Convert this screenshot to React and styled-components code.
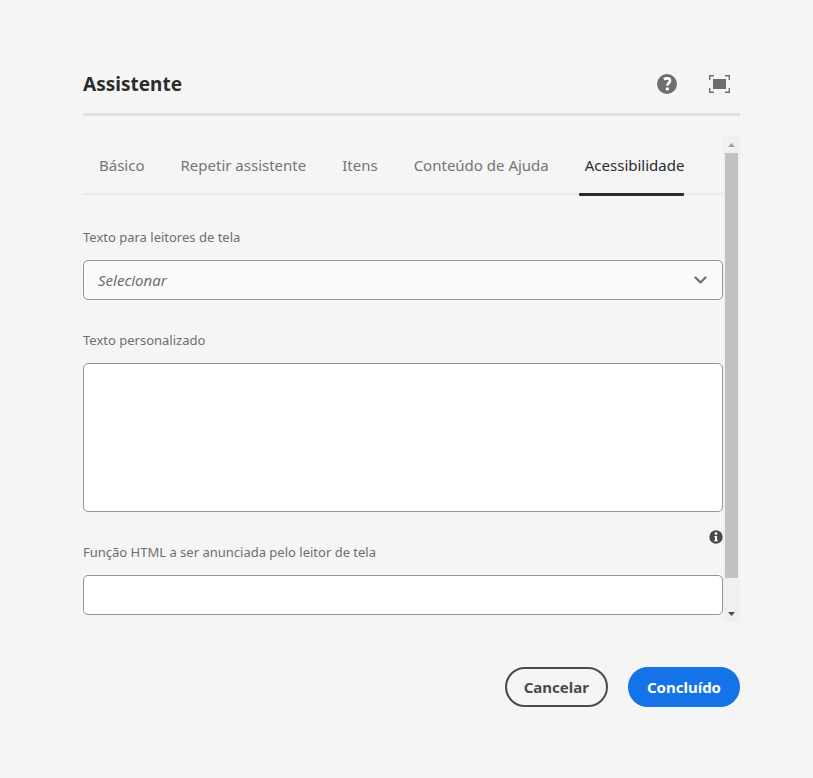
import React, { useState } from 'react';
import styled, { createGlobalStyle } from 'styled-components';

const GlobalStyle = createGlobalStyle`
  *, *::before, *::after { box-sizing: border-box; }
  body {
    margin: 0;
    background: #f5f5f5;
    color: #6e6e6e;
    font-family: 'Noto Sans', sans-serif;
  }
  button, input, select, textarea { font-family: inherit; margin: 0; }
`;

const Dialog = styled.main`
  display: flex;
  flex-direction: column;
  padding: 64px 73px 64px 83px;
`;

const Header = styled.header`
  display: flex;
  align-items: center;
  justify-content: space-between;
  height: 52px;
  padding: 0 10px 9px 0;
  border-bottom: 3px solid #e0e0e0;
`;

const Title = styled.h1`
  margin: 0;
  font-size: 19px;
  line-height: 24px;
  font-weight: 700;
  color: #2c2c2c;
`;

const HeaderActions = styled.div`
  display: flex;
  align-items: center;
  gap: 32px;
`;

const IconButton = styled.button`
  display: flex;
  padding: 0;
  border: 0;
  background: none;
  color: ${({ $dark }) => ($dark ? '#4b4b4b' : '#6e6e6e')};
  cursor: pointer;
`;

const Body = styled.div`
  display: flex;
  margin-top: 20px;
`;

const Content = styled.div`
  flex: 1;
  min-width: 0;
  padding-bottom: 7px;
`;

const TabList = styled.div`
  display: flex;
  gap: 36px;
  height: 59px;
  padding: 0 16px;
  border-bottom: 2px solid #eaeaea;
`;

const Tab = styled.button`
  position: relative;
  padding: 0;
  border: 0;
  background: none;
  font-size: 15px;
  line-height: 24px;
  white-space: nowrap;
  color: ${({ $active }) => ($active ? '#2c2c2c' : '#747474')};
  cursor: pointer;

  &::after {
    content: '';
    display: ${({ $active }) => ($active ? 'block' : 'none')};
    position: absolute;
    left: -6px;
    right: 0;
    bottom: -3px;
    height: 3px;
    border-radius: 1px;
    background: #2c2c2c;
  }
`;

const Form = styled.form`
  display: flex;
  flex-direction: column;
  gap: 30px;
  padding-top: 32px;
`;

const Field = styled.div`
  display: flex;
  flex-direction: column;
  gap: 13px;
`;

const Label = styled.label`
  font-size: 13px;
  line-height: 20px;
  color: #6e6e6e;
`;

const SelectBox = styled.div`
  display: grid;
  align-items: center;

  > * { grid-area: 1 / 1; }
  > svg { justify-self: end; margin-right: 16px; pointer-events: none; }
`;

const Select = styled.select`
  appearance: none;
  width: 100%;
  height: 40px;
  padding: 0 40px 0 14px;
  border: 1px solid #959595;
  border-radius: 5px;
  background: #fafafa;
  color: #6e6e6e;
  font-size: 15px;
  font-style: italic;
`;

const TextArea = styled.textarea`
  display: block;
  width: 100%;
  height: 149px;
  padding: 8px 14px;
  border: 1px solid #959595;
  border-radius: 5px;
  background: #fff;
  font-size: 15px;
  resize: none;
`;

const TextInput = styled.input`
  width: 100%;
  height: 40px;
  padding: 0 14px;
  border: 1px solid #959595;
  border-radius: 5px;
  background: #fff;
  font-size: 15px;
`;

const LabelRow = styled.div`
  display: flex;
  align-items: flex-end;
  justify-content: space-between;
`;

const InfoSlot = styled.div`
  align-self: flex-start;
  height: 32px;
`;

const InfoField = styled(Field)`
  margin-top: -12px;
`;

const ScrollBar = styled.div`
  display: flex;
  flex-direction: column;
  width: 17px;
  background: #f0f0f0;
`;

const ScrollArrow = styled.button`
  display: flex;
  align-items: center;
  justify-content: center;
  height: 17px;
  padding: 0;
  border: 0;
  background: none;
  color: ${({ $muted }) => ($muted ? '#a3a3a3' : '#505050')};
`;

const ScrollTrack = styled.div`
  flex: 1;
  padding: 0 2px;
`;

const ScrollThumb = styled.div`
  height: 94%;
  background: #c1c1c1;
`;

const Footer = styled.footer`
  display: flex;
  justify-content: flex-end;
  gap: 20px;
  margin-top: 45px;
`;

const ActionButton = styled.button`
  height: 40px;
  padding: 0 17px;
  border: 2px solid ${({ $primary }) => ($primary ? '#1473e6' : '#4b4b4b')};
  border-radius: 20px;
  background: ${({ $primary }) => ($primary ? '#1473e6' : 'transparent')};
  color: ${({ $primary }) => ($primary ? '#fff' : '#4b4b4b')};
  font-size: 15px;
  font-weight: 700;
  cursor: pointer;
`;

const HelpIcon = () => (
  <svg width="20" height="20" viewBox="0 0 20 20" aria-hidden="true">
    <circle cx="10" cy="10" r="10" fill="currentColor" />
    <path d="M7 5.4C8 4.6 9 4.4 10.1 4.4c1.800 0 2.900.9 2.900 2.400 0 1.100-.5 1.700-1.400 2.500-.9.8-1.200 1.200-1.100 2.400" fill="none" stroke="#fff" strokeWidth="2.700" />
    <circle cx="10.300" cy="14.900" r="1.700" fill="#fff" />
  </svg>
);

const FullScreenIcon = () => (
  <svg width="21" height="18" viewBox="0 0 21 18" aria-hidden="true">
    <rect x="4" y="4" width="13" height="10" fill="currentColor" />
    <path d="M.7 5V.7H5M16 .7h4.300V5M20.300 13v4.300H16M5 17.300H.7V13" fill="none" stroke="currentColor" strokeWidth="1.400" />
  </svg>
);

const ChevronIcon = () => (
  <svg width="13" height="8" viewBox="0 0 13 8" aria-hidden="true">
    <path d="M1.500 1.500l5 5 5-5" fill="none" stroke="#6e6e6e" strokeWidth="2.200" strokeLinecap="round" strokeLinejoin="round" />
  </svg>
);

const InfoIcon = () => (
  <svg width="14" height="14" viewBox="0 0 14 14" aria-hidden="true">
    <circle cx="7" cy="7" r="6.700" fill="currentColor" />
    <circle cx="7" cy="3.600" r="1.300" fill="#fff" />
    <path d="M5.300 6H8v4.200h1v1H5.200v-1H6V7h-.7z" fill="#fff" />
  </svg>
);

const ArrowIcon = ({ up }) => (
  <svg width="7" height="4" viewBox="0 0 7 4" aria-hidden="true">
    <path d={up ? 'M0 4L3.500 0 7 4z' : 'M0 0l3.500 4L7 0z'} fill="currentColor" />
  </svg>
);

const TABS = ['Básico', 'Repetir assistente', 'Itens', 'Conteúdo de Ajuda', 'Acessibilidade'];

export default function App() {
  const [active, setActive] = useState('Acessibilidade');

  return (
    <>
      <GlobalStyle />
      <Dialog role="dialog" aria-labelledby="dialog-title">
        <Header>
          <Title id="dialog-title">Assistente</Title>
          <HeaderActions>
            <IconButton type="button" aria-label="Ajuda"><HelpIcon /></IconButton>
            <IconButton type="button" aria-label="Tela cheia"><FullScreenIcon /></IconButton>
          </HeaderActions>
        </Header>

        <Body>
          <Content>
            <TabList role="tablist">
              {TABS.map((tab) => (
                <Tab
                  key={tab}
                  type="button"
                  role="tab"
                  aria-selected={tab === active}
                  $active={tab === active}
                  onClick={() => setActive(tab)}
                >
                  {tab}
                </Tab>
              ))}
            </TabList>

            <Form id="wizard-form" onSubmit={(e) => e.preventDefault()}>
              <Field>
                <Label htmlFor="reader-text">Texto para leitores de tela</Label>
                <SelectBox>
                  <Select id="reader-text" defaultValue="">
                    <option value="">Selecionar</option>
                  </Select>
                  <ChevronIcon />
                </SelectBox>
              </Field>

              <Field>
                <Label htmlFor="custom-text">Texto personalizado</Label>
                <TextArea id="custom-text" />
              </Field>

              <InfoField>
                <LabelRow>
                  <Label htmlFor="html-role">Função HTML a ser anunciada pelo leitor de tela</Label>
                  <InfoSlot>
                    <IconButton type="button" $dark aria-label="Informações"><InfoIcon /></IconButton>
                  </InfoSlot>
                </LabelRow>
                <TextInput id="html-role" type="text" />
              </InfoField>
            </Form>
          </Content>

          <ScrollBar>
            <ScrollArrow type="button" $muted aria-label="Rolar para cima"><ArrowIcon up /></ScrollArrow>
            <ScrollTrack><ScrollThumb /></ScrollTrack>
            <ScrollArrow type="button" aria-label="Rolar para baixo"><ArrowIcon /></ScrollArrow>
          </ScrollBar>
        </Body>

        <Footer>
          <ActionButton type="button">Cancelar</ActionButton>
          <ActionButton type="submit" form="wizard-form" $primary>Concluído</ActionButton>
        </Footer>
      </Dialog>
    </>
  );
}
